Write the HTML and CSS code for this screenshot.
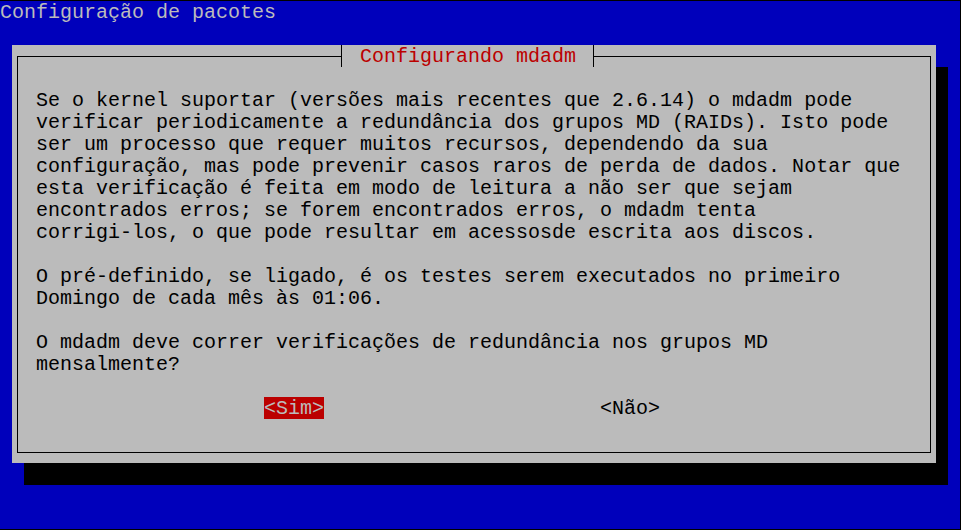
FILE: index.html
```html
<!DOCTYPE html>
<html lang="pt">
<head>
<meta charset="utf-8">
<title>Configuração de pacotes</title>
<link rel="stylesheet" href="styles.css">
</head>
<body>
<div class="screen">
  <div class="titlebar">Configuração de pacotes</div>
  <div class="dialog">
    <div class="frame">
      <div class="frame-title">Configurando mdadm</div>
      <div class="body">
        <p class="para">Se o kernel suportar (versões mais recentes que 2.6.14) o mdadm pode<br>verificar periodicamente a redundância dos grupos MD (RAIDs). Isto pode<br>ser um processo que requer muitos recursos, dependendo da sua<br>configuração, mas pode prevenir casos raros de perda de dados. Notar que<br>esta verificação é feita em modo de leitura a não ser que sejam<br>encontrados erros; se forem encontrados erros, o mdadm tenta<br>corrigi-los, o que pode resultar em acessosde escrita aos discos.</p>
        <p class="para">O pré-definido, se ligado, é os testes serem executados no primeiro<br>Domingo de cada mês às 01:06.</p>
        <p class="para">O mdadm deve correr verificações de redundância nos grupos MD<br>mensalmente?</p>
        <div class="buttons">
          <span class="btn btn-active">&lt;Sim&gt;</span>
          <span class="btn">&lt;Não&gt;</span>
        </div>
      </div>
    </div>
  </div>
</div>
</body>
</html>
```

FILE: styles.css
```css
html {
  background: #000;
}
body {
  margin: 1px 1px 0 0;
  padding: 0;
  width: 960px;
  height: 528px;
  overflow: hidden;
  background: #0000bb;
  font-family: "Liberation Mono", "Courier New", monospace;
  font-size: 20px;
  line-height: 22px;
  color: #bbbbbb;
}
.screen {
  width: 960px;
  height: 528px;
}
.titlebar {
  height: 21px;
  padding-top: 1px;
  white-space: pre;
  color: #bbbbbb;
}
.dialog {
  box-sizing: border-box;
  margin: 22px 0 0 12px;
  width: 924px;
  height: 418px;
  padding: 11px 5px 10px 5px;
  background: #bbbbbb;
  box-shadow: 12px 22px 0 0 #000;
}
.frame {
  position: relative;
  box-sizing: border-box;
  height: 397px;
  border: 1px solid #000;
}
.frame-title {
  position: absolute;
  left: 323px;
  top: -12px;
  height: 21px;
  padding: 1px 17px 0 18px;
  border-left: 1px solid #000;
  border-right: 1px solid #000;
  background: #bbbbbb;
  color: #bb0000;
  white-space: pre;
}
.body {
  padding: 32px 0 0 18px;
  color: #000;
}
.para {
  margin: 0 0 21px 0;
  padding-top: 1px;
  white-space: nowrap;
}
.buttons {
  display: flex;
  gap: 276px;
  padding-left: 228px;
  height: 22px;
}
.btn {
  display: block;
  height: 21px;
  padding-top: 1px;
  white-space: pre;
  color: #000;
}
.btn-active {
  background: #bb0000;
  color: #bbbbbb;
}
```
